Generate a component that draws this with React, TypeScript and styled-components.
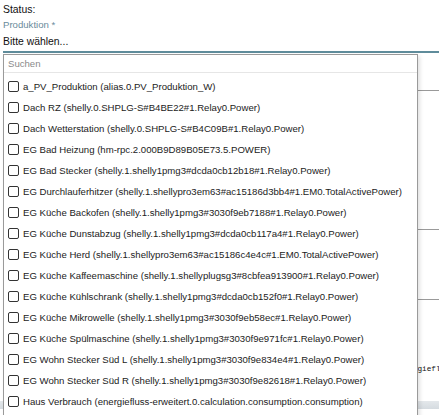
import React from "react";
import styled, {createGlobalStyle} from "styled-components";

const GlobalStyle = createGlobalStyle`
  html, body {
    margin: 0;
    padding: 0;
    background: #fff;
  }
  body {
    font-family: "Liberation Sans", Arial, sans-serif;
    color: #111;
  }`

const Page = styled.div`
  width: 439px;
  height: 415px;
  overflow: hidden;
  padding-left: 3px;
  box-sizing: border-box;`
const StatusLabel = styled.div`
  margin-top: 2px;
  font-size: 10.4px;
  line-height: 15px;`
const FieldLabel = styled.div`
  font-size: 9.6px;
  line-height: 16px;
  color: #6a8b9b;`
const SelectWrap = styled.div`
  position: relative;`
const SelectValue = styled.div`
  height: 18px;
  line-height: 18px;
  font-size: 10.4px;
  border-bottom: 2px solid #5f8c9b;`

const FormBody = styled.div`
  display: flex;
  flex-direction: column;`
const Section = styled.div<{ $h: number }>`
  height: ${p => p.$h}px;
  border-bottom: 1px solid #9a9a9a;
  box-sizing: border-box;`
const CodeArea = styled.pre`
  margin: 0;
  height: 101px;
  padding: 64px 0 0 396px;
  box-sizing: border-box;
  overflow: hidden;
  font-family: "Liberation Mono", monospace;
  font-size: 7.7px;
  line-height: 10px;
  color: #111;
  white-space: pre;`
const ScrollBar = styled.div`
  height: 8px;
  margin-left: -3px;
  background: linear-gradient(#e4e8eb, #d5dbe0);`

const Dropdown = styled.div`
  position: absolute;
  top: calc(100% + 1px);
  left: 0;
  width: 415px;
  background: #fff;
  border: 1px solid #9a9a9a;
  box-sizing: border-box;
  box-shadow: 2px 2px 4px rgba(0, 0, 0, 0.12);
  z-index: 10;`
const SearchInput = styled.input`
  display: block;
  width: 100%;
  height: 18px;
  border: none;
  border-bottom: 1px solid #e6e6e6;
  padding: 0 4px;
  box-sizing: border-box;
  font-family: "Liberation Sans", Arial, sans-serif;
  font-size: 9.6px;
  outline: none;

  &::placeholder {
    color: #8a8a8a;
  }`
const OptionList = styled.ul`
  list-style: none;
  margin: 0;
  padding: 3px 0 10px;`
const Option = styled.li`
  display: flex;
  align-items: center;
  gap: 4px;
  height: 21px;
  padding-left: 4px;
  font-size: 9.6px;
  color: #222;
  white-space: nowrap;`
const CheckBox = styled.span`
  width: 11px;
  height: 11px;
  border: 1px solid #333;
  border-radius: 2px;
  box-sizing: border-box;
  flex-shrink: 0;`

const options = [
    "a_PV_Produktion (alias.0.PV_Produktion_W)",
    "Dach RZ (shelly.0.SHPLG-S#B4BE22#1.Relay0.Power)",
    "Dach Wetterstation (shelly.0.SHPLG-S#B4C09B#1.Relay0.Power)",
    "EG Bad Heizung (hm-rpc.2.000B9D89B05E73.5.POWER)",
    "EG Bad Stecker (shelly.1.shelly1pmg3#dcda0cb12b18#1.Relay0.Power)",
    "EG Durchlauferhitzer (shelly.1.shellypro3em63#ac15186d3bb4#1.EM0.TotalActivePower)",
    "EG Küche Backofen (shelly.1.shelly1pmg3#3030f9eb7188#1.Relay0.Power)",
    "EG Küche Dunstabzug (shelly.1.shelly1pmg3#dcda0cb117a4#1.Relay0.Power)",
    "EG Küche Herd (shelly.1.shellypro3em63#ac15186c4e4c#1.EM0.TotalActivePower)",
    "EG Küche Kaffeemaschine (shelly.1.shellyplugsg3#8cbfea913900#1.Relay0.Power)",
    "EG Küche Kühlschrank (shelly.1.shelly1pmg3#dcda0cb152f0#1.Relay0.Power)",
    "EG Küche Mikrowelle (shelly.1.shelly1pmg3#3030f9eb58ec#1.Relay0.Power)",
    "EG Küche Spülmaschine (shelly.1.shelly1pmg3#3030f9e971fc#1.Relay0.Power)",
    "EG Wohn Stecker Süd L (shelly.1.shelly1pmg3#3030f9e834e4#1.Relay0.Power)",
    "EG Wohn Stecker Süd R (shelly.1.shelly1pmg3#3030f9e82618#1.Relay0.Power)",
    "Haus Verbrauch (energiefluss-erweitert.0.calculation.consumption.consumption)",
]

export default function App() {
    return (
        <>
            <GlobalStyle/>
            <Page>
                <StatusLabel>Status:</StatusLabel>
                <FieldLabel>Produktion *</FieldLabel>
                <SelectWrap>
                    <SelectValue>Bitte wählen...</SelectValue>
                    <Dropdown>
                        <SearchInput placeholder="Suchen"/>
                        <OptionList>
                            {options.map(o => (
                                <Option key={o}>
                                    <CheckBox/>
                                    {o}
                                </Option>
                            ))}
                        </OptionList>
                    </Dropdown>
                </SelectWrap>
                <FormBody>
                    <Section $h={38}/>
                    <Section $h={139}/>
                    <Section $h={70}/>
                    <CodeArea>{"energiefluss"}</CodeArea>
                    <ScrollBar/>
                </FormBody>
            </Page>
        </>
    )
}
